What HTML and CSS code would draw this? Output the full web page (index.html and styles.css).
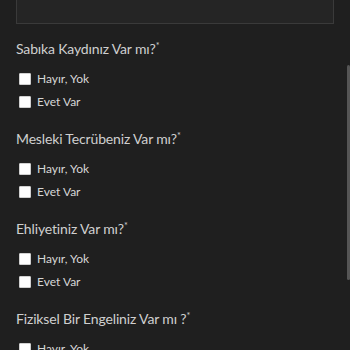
FILE: index.html
```html
<!DOCTYPE html>
<html lang="tr">
<head>
<meta charset="utf-8">
<link rel="stylesheet" href="styles.css">
</head>
<body>
<div class="page">
  <div class="textarea"></div>
  <div class="question">
    <div class="q-title">Sabıka Kaydınız Var mı?<span class="req">*</span></div>
    <label class="opt"><span class="box"></span><span class="lbl">Hayır, Yok</span></label>
    <label class="opt"><span class="box"></span><span class="lbl">Evet Var</span></label>
  </div>
  <div class="question">
    <div class="q-title">Mesleki Tecrübeniz Var mı?<span class="req">*</span></div>
    <label class="opt"><span class="box"></span><span class="lbl">Hayır, Yok</span></label>
    <label class="opt"><span class="box"></span><span class="lbl">Evet Var</span></label>
  </div>
  <div class="question">
    <div class="q-title">Ehliyetiniz Var mı?<span class="req">*</span></div>
    <label class="opt"><span class="box"></span><span class="lbl">Hayır, Yok</span></label>
    <label class="opt"><span class="box"></span><span class="lbl">Evet Var</span></label>
  </div>
  <div class="question">
    <div class="q-title">Fiziksel Bir Engeliniz Var mı ?<span class="req">*</span></div>
    <label class="opt"><span class="box"></span><span class="lbl">Hayır, Yok</span></label>
    <label class="opt"><span class="box"></span><span class="lbl">Evet Var</span></label>
  </div>
</div>
<div class="scrollbar"></div>
</body>
</html>
```
FILE: styles.css
```css
html, body {
  margin: 0;
  padding: 0;
  height: 100%;
  overflow: hidden;
  background: #1f1f1f;
}
body {
  font-family: Lato, "Open Sans", sans-serif;
  color: #d2d2d2;
}
.page {
  padding: 0 16px;
  display: flex;
  flex-direction: column;
}
.textarea {
  height: 23px;
  background: #252525;
  border: 1px solid #3a3a3a;
  border-top: none;
}
.question {
  display: flex;
  flex-direction: column;
  padding-top: 12px;
  padding-bottom: 1px;
}
.q-title {
  font-size: 14px;
  letter-spacing: -0.15px;
  line-height: 20px;
  height: 20px;
  color: #cfcfcf;
  margin-bottom: 11px;
}
.req {
  font-size: 9px;
  vertical-align: 5px;
}
.opt {
  display: flex;
  align-items: center;
  height: 23px;
  padding-left: 3px;
}
.box {
  width: 10px;
  height: 10px;
  background: #fdfdfd;
  border: 1px solid #cfcfcf;
  border-radius: 1px;
  flex: none;
}
.lbl {
  margin-left: 6px;
  font-size: 12px;
  color: #d6d6d6;
}
.scrollbar {
  position: absolute;
  right: 0;
  top: 65px;
  width: 3px;
  height: 215px;
  background: #555;
  border-radius: 2px;
}
```
